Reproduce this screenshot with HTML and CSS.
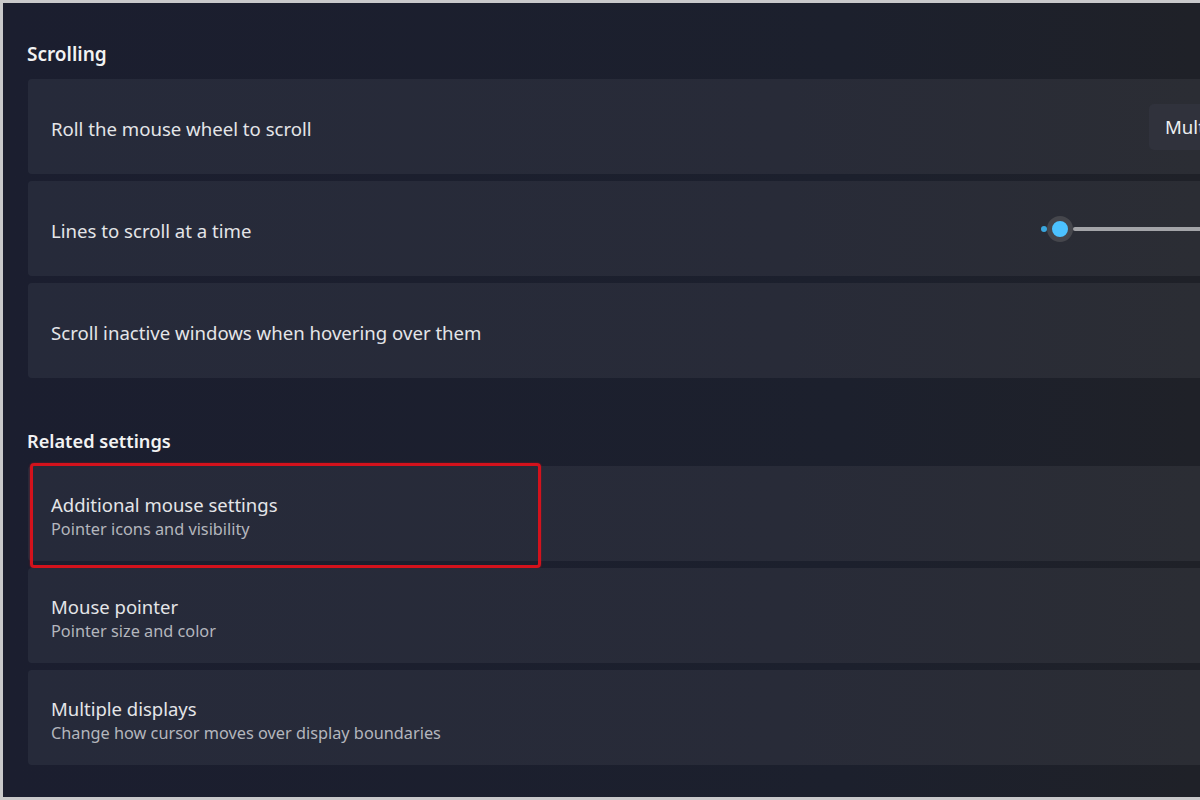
FILE: index.html
```html
<!DOCTYPE html>
<html lang="en">
<head>
    <meta charset="UTF-8">
    <meta name="viewport" content="width=device-width, initial-scale=1.0">
    <title>Mouse settings</title>
    <link rel="stylesheet" href="styles.css">
</head>
<body>
    <div class="screen">
        <h3 class="group-title">Scrolling</h3>

        <div class="card">
            <span class="card-label">Roll the mouse wheel to scroll</span>
            <div class="dropdown">Multiple lines at a time</div>
        </div>

        <div class="card">
            <span class="card-label">Lines to scroll at a time</span>
            <div class="slider">
                <span class="slider-fill"></span>
                <span class="slider-thumb"></span>
                <span class="slider-track"></span>
            </div>
        </div>

        <div class="card">
            <span class="card-label">Scroll inactive windows when hovering over them</span>
        </div>

        <h3 class="group-title related">Related settings</h3>

        <div class="card link-card highlighted">
            <div class="card-text">
                <span class="card-label">Additional mouse settings</span>
                <span class="card-sub">Pointer icons and visibility</span>
            </div>
            <!-- red marker drawn over the first related setting -->
            <div class="marker"></div>
        </div>

        <div class="card link-card">
            <div class="card-text">
                <span class="card-label">Mouse pointer</span>
                <span class="card-sub">Pointer size and color</span>
            </div>
        </div>

        <div class="card link-card">
            <div class="card-text">
                <span class="card-label">Multiple displays</span>
                <span class="card-sub">Change how cursor moves over display boundaries</span>
            </div>
        </div>
    </div>
</body>
</html>
```

FILE: styles.css
```css
body {
    margin: 0;
    background-color: #c9c9cb;
    font-family: "Noto Sans", "Open Sans", sans-serif;
    overflow: hidden;
    height: 800px;
}

.screen {
    margin: 3px 0 0 3px;
    width: 1400px;
    height: 794px;
    box-sizing: border-box;
    padding: 38px 0 0 25px;
    background: linear-gradient(90deg, #1b1e2f 0%, #1c202d 60%, #1f2128 85%);
}

.group-title {
    margin: 0 0 12px -1px;
    font-size: 19px;
    line-height: 26px;
    font-weight: 600;
    color: #f2f2f2;
}

.group-title.related {
    margin-top: 50px;
    margin-bottom: 12px;
    font-size: 18.2px;
}

.card {
    position: relative;
    display: flex;
    align-items: center;
    height: 95px;
    box-sizing: border-box;
    padding: 4px 21px 0 23px;
    margin-bottom: 7px;
    border-radius: 4px;
    background: linear-gradient(90deg, #262a3a 0%, #282b38 55%, #2b2d34 85%);
}

.link-card {
    height: 95px;
    margin-bottom: 7px;
}

.card-label {
    font-size: 18.6px;
    color: #e4e5e8;
}

.card-text {
    display: flex;
    flex-direction: column;
    padding-top: 1px;
}

.card-text .card-label {
    font-size: 18.5px;
    line-height: 26px;
}

.card-sub {
    font-size: 16.3px;
    line-height: 22px;
    color: #b4b6bd;
}

.dropdown {
    margin-left: auto;
    margin-top: -4px;
    width: 233px;
    height: 46px;
    box-sizing: border-box;
    padding: 0 0 0 16px;
    display: flex;
    align-items: center;
    border-radius: 5px;
    background-color: #30323c;
    font-size: 18.6px;
    color: #eceef0;
    white-space: nowrap;
    overflow: hidden;
}

.slider {
    margin-left: auto;
    margin-top: -4px;
    width: 341px;
    height: 26px;
    display: flex;
    align-items: center;
}

.slider-fill {
    width: 6px;
    height: 6px;
    border-radius: 50%;
    background-color: #3aa6dd;
}

.slider-thumb {
    width: 16px;
    height: 16px;
    border: 5px solid #45464c;
    border-radius: 50%;
    background-color: #4cc2ff;
}

.slider-track {
    flex: 1;
    height: 4px;
    background-color: #a3a4a8;
    border-radius: 2px;
}

.marker {
    position: absolute;
    left: 2px;
    top: -3px;
    width: 511px;
    height: 105px;
    box-sizing: border-box;
    border: 3px solid #d3121c;
    border-radius: 4px;
    box-shadow: 0 0 2px rgba(211, 18, 28, 0.6);
}
```
